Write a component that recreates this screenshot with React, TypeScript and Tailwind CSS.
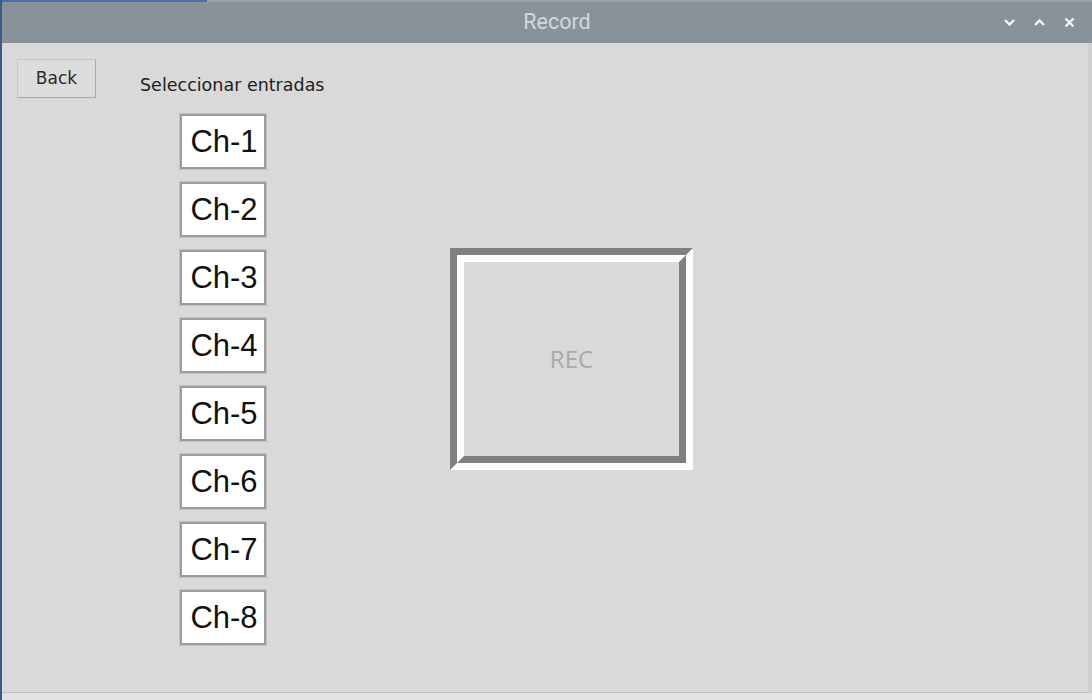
const channels = ['Ch-1', 'Ch-2', 'Ch-3', 'Ch-4', 'Ch-5', 'Ch-6', 'Ch-7', 'Ch-8'];

function ChannelButton({ label }: { label: string }) {
  return (
    <div className="border border-[#c2c2c2] w-[88px] h-[57px]">
      <div className="h-full border-2 border-[#9c9c9c] bg-white flex items-center justify-center pl-[2px]">
        <span className="text-[31px] text-[#111] leading-none font-['Liberation_Sans',Arial,sans-serif]">
          {label}
        </span>
      </div>
    </div>
  );
}

export default function App() {
  return (
    <div className="w-[1092px] h-[700px] bg-[#d9d9d9] flex flex-col overflow-hidden border-l-2 border-[#3b5a8c]">
      <div className="h-[43px] shrink-0 bg-[#899199] border-t-2 border-[#9aa2aa] flex items-center relative">
        <div className="absolute top-[-2px] left-0 w-[205px] h-[2px] bg-[#4a6fa8]" />
        <div className="flex-1 text-center text-[21.5px] text-[#d4d8dc] font-['Roboto',sans-serif] pl-[20px]">
          Record
        </div>
        <div className="absolute right-[16px] top-[14px] flex items-center gap-[17px]">
          <svg width="13" height="13" viewBox="0 0 13 13">
            <path d="M2 4 L6.5 8.5 L11 4" stroke="#f4f4f4" strokeWidth="2.4" fill="none" />
          </svg>
          <svg width="13" height="13" viewBox="0 0 13 13">
            <path d="M2 9 L6.5 4.5 L11 9" stroke="#f4f4f4" strokeWidth="2.4" fill="none" />
          </svg>
          <svg width="13" height="13" viewBox="0 0 13 13">
            <path d="M2.5 2.5 L10.5 10.5 M10.5 2.5 L2.5 10.5" stroke="#f4f4f4" strokeWidth="2.4" fill="none" />
          </svg>
        </div>
      </div>

      <div className="flex-1 flex border-r-[4px] border-[#cfcfcf] border-b border-b-[#bdbdbd]">
        <div className="pl-[15px] pt-[16px]">
          <div className="w-[79px] h-[39px] border border-[#c6c6c6] border-r-[#a8a8a8] border-b-[#a8a8a8] bg-[#dcdcdc] flex items-center justify-center text-[17px] text-[#2a2a2a] font-['DejaVu_Sans',sans-serif]">
            Back
          </div>
        </div>

        <div className="ml-[44px] w-[310px] pt-[31px] flex flex-col">
          <div className="text-[17.5px] leading-[22px] text-[#1e1e1e] font-['DejaVu_Sans',sans-serif]">
            Seleccionar entradas
          </div>
          <div className="ml-[39px] mt-[17px] flex flex-col gap-[11px]">
            {channels.map((c) => (
              <ChannelButton key={c} label={c} />
            ))}
          </div>
        </div>

        <div className="pt-[205px]">
          <div className="w-[243px] h-[222px] border-[7px] border-t-[#808080] border-l-[#808080] border-b-white border-r-white">
            <div className="h-full border-[7px] border-t-white border-l-white border-b-[#808080] border-r-[#808080] flex items-center justify-center">
              <span className="text-[24px] text-[#a9a9a9] font-['Open_Sans',sans-serif]">REC</span>
            </div>
          </div>
        </div>
      </div>
      <div className="h-[7px] shrink-0 bg-[#e2e2e2]" />
    </div>
  );
}
